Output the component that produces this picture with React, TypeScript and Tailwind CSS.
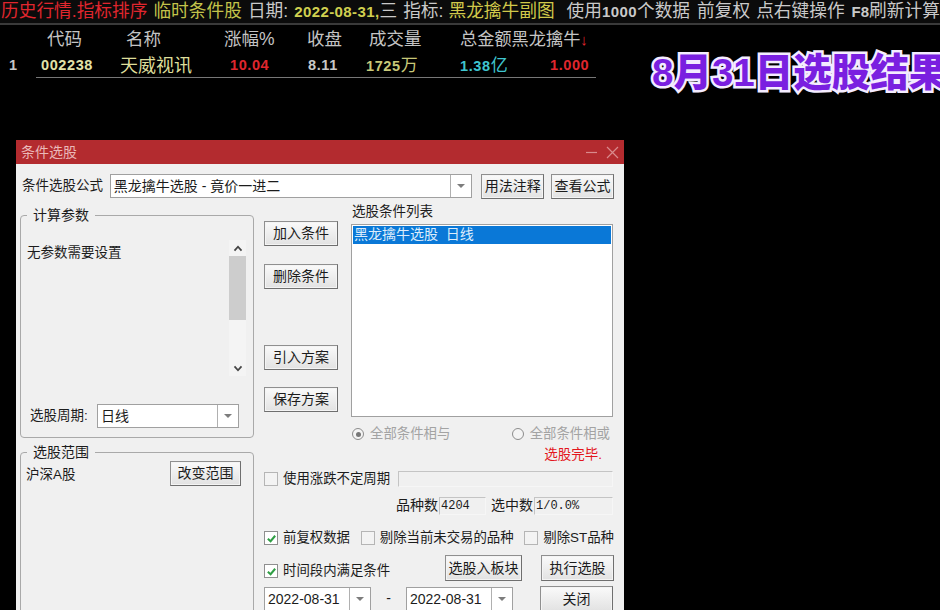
import React from "react";

const cjk = "font-['Liberation_Sans','Noto_Sans_CJK_SC',sans-serif]";

function Btn({ children, className = "" }: { children: React.ReactNode; className?: string }) {
  return (
    <div className={`flex items-center justify-center border border-[#8f8f8f] border-b-[#6f6f6f] border-r-[#6f6f6f] bg-gradient-to-b from-[#fafafa] to-[#e2e2e2] text-[14px] text-[#1c1c1c] shadow-[inset_0_0_0_1px_#f4f4f4] ${className}`}>
      {children}
    </div>
  );
}

function Caret() {
  return <span className="h-0 w-0 border-x-[4px] border-t-[4px] border-x-transparent border-t-[#7d7d7d]" />;
}

function Combo({ text, className = "" }: { text: string; className?: string }) {
  return (
    <div className={`flex items-center border border-[#a0a0a0] bg-white ${className}`}>
      <span className="flex-1 whitespace-pre pl-[3px] text-[14px] text-[#1c1c1c]">{text}</span>
      <span className="flex h-full w-[21px] items-center justify-center border-l border-[#b0b0b0]">
        <Caret />
      </span>
    </div>
  );
}

function Check({ on, label, className = "" }: { on?: boolean; label: string; className?: string }) {
  return (
    <div className={`flex items-center gap-[5px] text-[13.4px] text-[#1c1c1c] ${className}`}>
      <span className={`flex h-[14px] w-[14px] items-center justify-center border ${on ? "border-[#8f8f8f] bg-white" : "border-[#b5b5b5] bg-[#f3f3f3]"}`}>
        {on && (
          <svg viewBox="0 0 12 12" className="h-[11px] w-[11px]">
            <path d="M2 6.2 L5 9 L10 3" fill="none" stroke="#2f9e44" strokeWidth="2.2" />
          </svg>
        )}
      </span>
      <span className="whitespace-nowrap">{label}</span>
    </div>
  );
}

function Radio({ on, label }: { on?: boolean; label: string }) {
  return (
    <div className="flex items-center gap-[6px] text-[13.4px] text-[#a3a3a3]">
      <span className="flex h-[12px] w-[12px] items-center justify-center rounded-full border border-[#8c8c8c] bg-[#f4f4f4]">
        {on && <span className="h-[5px] w-[5px] rounded-full bg-[#777777]" />}
      </span>
      <span className="whitespace-nowrap">{label}</span>
    </div>
  );
}

function Chevron({ up }: { up?: boolean }) {
  return (
    <svg viewBox="0 0 10 8" className="h-[7px] w-[10px]">
      <path d={up ? "M1 6.5 L5 2 L9 6.5" : "M1 1.5 L5 6 L9 1.5"} fill="none" stroke="#444444" strokeWidth="2" />
    </svg>
  );
}

function Group({ title, className = "", children }: { title: string; className?: string; children: React.ReactNode }) {
  return (
    <fieldset className={`rounded-[4px] border border-[#a9a9a9] ${className}`}>
      <legend className="ml-[6px] px-[6px] text-[14px] leading-[16px] text-[#1c1c1c]">{title}</legend>
      {children}
    </fieldset>
  );
}

export default function App() {
  return (
    <div className={`flex h-[610px] w-[940px] flex-col overflow-hidden bg-black ${cjk}`}>
      <header className="flex h-[25px] shrink-0 items-center whitespace-nowrap border-b-2 border-[#3a3a3a] bg-[#0b0b0b] pl-[1px] text-[17.7px] leading-none text-[#c9c9c9]">
        <span className="text-[#e0262e]">历史行情.指标排序</span>
        <span className="ml-[6px] text-[#c3c34a]">临时条件股</span>
        <span className="ml-[6px]">日期:</span>
        <span className="ml-[6px] text-[15px] font-bold tracking-[0.4px] text-[#d0d050]">2022-08-31,</span>
        <span>三</span>
        <span className="ml-[6px]">指标:</span>
        <span className="ml-[5px] text-[#d0c84a]">黑龙擒牛副图</span>
        <span className="ml-[12px]">使用</span>
        <span className="text-[15px] font-bold tracking-[0.4px]">1000</span>
        <span>个数据</span>
        <span className="ml-[7px]">前复权</span>
        <span className="ml-[6px]">点右键操作</span>
        <span className="ml-[7px] text-[15px] font-bold">F8</span>
        <span>刷新计算</span>
      </header>

      <div className="flex h-[115px] shrink-0">
        <div className="w-[596px] shrink-0">
          <div className="flex h-[29px] items-center whitespace-nowrap text-[17.5px] leading-none text-[#c4c4c4]">
            <span className="w-[47px]" />
            <span className="w-[79px]">代码</span>
            <span className="w-[98px]">名称</span>
            <span className="w-[83px]">涨幅%</span>
            <span className="w-[62px]">收盘</span>
            <span className="w-[91px]">成交量</span>
            <span className="text-[17.2px]">总金额黑龙擒牛</span>
            <span className="text-[15px] text-[#e0262e]">↓</span>
          </div>
          <div className="flex h-[23px] items-center whitespace-nowrap text-[14.5px] font-bold leading-none tracking-[0.6px]">
            <span className="w-[41px] pl-[9px] text-[#c8c8c8]">1</span>
            <span className="w-[79px] text-[#e2e2a8]">002238</span>
            <span className="w-[110px] text-[18px] font-normal tracking-normal text-[#dede9a]">天威视讯</span>
            <span className="w-[78px] text-[#e0262e]">10.04</span>
            <span className="w-[58px] text-[#c8c8c8]">8.11</span>
            <span className="w-[94px] text-[#c8c878]">1725<span className="text-[17px] font-normal">万</span></span>
            <span className="w-[90px] text-[#3fc5cf]">1.38<span className="text-[17px] font-normal">亿</span></span>
            <span className="text-[#e0262e]">1.000</span>
          </div>
          <div className="ml-[36px] h-[1px] bg-[#777777]" />
        </div>
        <div className="ml-[56px] mt-[23px] whitespace-nowrap text-[38.5px] font-black leading-[50px] text-[#7a1fe0] [-webkit-text-stroke:5px_#f4ecff] [paint-order:stroke_fill]">
          8月31日选股结果
        </div>
      </div>

      <div className="ml-[16px] w-[608px] shrink-0 bg-[#f0f0f0]">
        <div className="flex h-[24px] items-center justify-between bg-[#b32b2f] pl-[5px] pr-[5px] text-[14px] text-[#eab8b8]">
          <span>条件选股</span>
          <span className="flex items-center gap-[8px]">
            <svg viewBox="0 0 13 13" className="h-[13px] w-[13px]"><path d="M1 6.5 H12" stroke="#d98a8c" strokeWidth="1.2" /></svg>
            <svg viewBox="0 0 13 13" className="h-[13px] w-[13px]"><path d="M1 1 L12 12 M12 1 L1 12" stroke="#d98a8c" strokeWidth="1.2" /></svg>
          </span>
        </div>

        <div className="box-content flex h-[24px] items-center pl-[6px] pr-[10px] pt-[10px]">
          <span className="w-[88px] whitespace-nowrap text-[13.5px] text-[#1c1c1c]">条件选股公式</span>
          <Combo text="黑龙擒牛选股 - 竟价一进二" className="h-[24px] w-[363px]" />
          <Btn className="ml-[9px] h-[25px] w-[63px]">用法注释</Btn>
          <Btn className="ml-[7px] h-[25px] w-[63px]">查看公式</Btn>
        </div>

        <div className="mt-[5px] flex pl-[4px]">
          <div className="w-[234px] shrink-0">
            <Group title="计算参数" className="mt-[4px] flex h-[231px] flex-col">
              <div className="flex h-[181px] pl-[6px]">
                <span className="mt-[21px] flex-1 text-[13.5px] leading-[18px] text-[#1c1c1c]">无参数需要设置</span>
                <div className="mr-[7px] mt-[17px] flex h-[136px] w-[17px] flex-col items-center justify-between bg-[#f4f4f4]">
                  <div className="flex w-full flex-col items-center">
                    <span className="flex h-[16px] items-center"><Chevron up /></span>
                    <span className="h-[64px] w-full bg-[#cdcdcd]" />
                  </div>
                  <span className="flex h-[16px] items-center"><Chevron /></span>
                </div>
              </div>
              <div className="flex items-center pl-[9px]">
                <span className="w-[67px] whitespace-nowrap text-[13.5px] text-[#1c1c1c]">选股周期:</span>
                <Combo text="日线" className="h-[24px] w-[142px]" />
              </div>
            </Group>
            <Group title="选股范围" className="mt-[6px] h-[170px]">
              <div className="flex items-start justify-between pl-[5px] pr-[12px]">
                <span className="mt-[5px] whitespace-nowrap text-[13.5px] text-[#1c1c1c]">沪深A股</span>
                <Btn className="mt-[1px] h-[25px] w-[71px]">改变范围</Btn>
              </div>
            </Group>
          </div>

          <div className="ml-[10px] w-[350px] shrink-0">
            <div className="flex">
              <div className="flex w-[87px] shrink-0 flex-col pt-[18px]">
                <Btn className="h-[25px] w-[74px]">加入条件</Btn>
                <Btn className="mt-[18px] h-[25px] w-[74px]">删除条件</Btn>
                <Btn className="mt-[56px] h-[25px] w-[74px]">引入方案</Btn>
                <Btn className="mt-[17px] h-[25px] w-[74px]">保存方案</Btn>
              </div>
              <div className="flex-1">
                <div className="h-[21px] pl-[1px] text-[13.5px] leading-[18px] text-[#1c1c1c]">选股条件列表</div>
                <div className="h-[193px] w-[262px] border border-[#a0a0a0] bg-white p-[1px]">
                  <div className="h-[18px] whitespace-pre bg-[#0a78d7] pl-[1px] text-[14px] leading-[16px] text-[#dcecfb]">黑龙擒牛选股  日线</div>
                </div>
                <div className="mt-[7px] flex w-[262px] justify-between pl-[1px] pr-[3px]">
                  <Radio on label="全部条件相与" />
                  <Radio label="全部条件相或" />
                </div>
              </div>
            </div>
            <div className="mt-[2px] pr-[12px] text-right text-[13.5px] leading-[18px] text-[#e3171d]">选股完毕.</div>
            <div className="mt-[5px] flex items-center">
              <Check label="使用涨跌不定周期" className="w-[134px]" />
              <div className="h-[16px] w-[215px] border border-[#c4c4c4] border-b-[#f6f6f6] border-r-[#f6f6f6]" />
            </div>
            <div className="mt-[6px] flex items-center whitespace-nowrap pl-[132px] text-[14px] text-[#1c1c1c]">
              <span>品种数</span>
              <span className="ml-[1px] h-[18px] w-[47px] border border-[#c4c4c4] border-b-[#f6f6f6] border-r-[#f6f6f6] pl-[1px] font-['Liberation_Mono'] text-[12px] leading-[16px]">4204</span>
              <span className="ml-[5px]">选中数</span>
              <span className="ml-[1px] h-[18px] w-[79px] border border-[#c4c4c4] border-b-[#f6f6f6] border-r-[#f6f6f6] pl-[1px] font-['Liberation_Mono'] text-[12px] leading-[16px]">1/0.0%</span>
            </div>
            <div className="mt-[12px] flex items-center whitespace-nowrap">
              <Check on label="前复权数据" className="w-[97px]" />
              <Check label="剔除当前未交易的品种" className="w-[164px]" />
              <Check label="剔除ST品种" />
            </div>
            <div className="mt-[7px] flex">
              <div className="flex w-[181px] flex-col">
                <Check on label="时间段内满足条件" className="mt-[6px]" />
              </div>
              <Btn className="h-[26px] w-[77px]">选股入板块</Btn>
              <Btn className="ml-[19px] h-[26px] w-[73px]">执行选股</Btn>
            </div>
            <div className="mt-[5px] flex items-start">
              <Combo text="2022-08-31" className="mt-[1px] h-[24px] w-[107px]" />
              <span className="w-[35px] text-center text-[14px] leading-[24px] text-[#1c1c1c]">-</span>
              <Combo text="2022-08-31" className="mt-[1px] h-[24px] w-[107px]" />
              <Btn className="ml-[27px] h-[26px] w-[73px]">关闭</Btn>
            </div>
          </div>
        </div>
      </div>
    </div>
  );
}
